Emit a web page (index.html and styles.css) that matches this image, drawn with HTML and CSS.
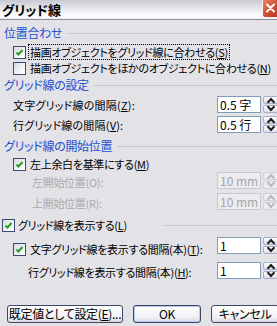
FILE: index.html
```html
<!DOCTYPE html>
<html lang="ja">
  <head>
    <meta charset="UTF-8" />
    <title>グリッド線</title>
    <link rel="stylesheet" href="styles.css">
  </head>
  <body>
    <div class="dialog">
      <div class="titlebar">
        <span class="title">グリッド線</span>
        <span class="close">
          <svg width="16" height="17" viewBox="0 0 16 17"><path d="M4 4.5 L11 11.5 M11 4.5 L4 11.5" stroke="#fff" stroke-width="2" stroke-linecap="round" /></svg>
        </span>
      </div>

      <div class="content">
        <div class="group g1"><span>位置合わせ</span></div>
        <div class="check cb1">
          <span class="box"><svg width="9" height="9" viewBox="0 0 9 9"><path d="M1.5 4.5 L3.5 6.5 L7.5 2" fill="none" stroke="#21a121" stroke-width="2" /></svg></span>
          <span class="focus">描画オブジェクトをグリッド線に合わせる(<u>S</u>)</span>
        </div>
        <div class="check cb2">
          <span class="box"></span>
          <span>描画オブジェクトをほかのオブジェクトに合わせる(<u>N</u>)</span>
        </div>

        <div class="group g2"><span>グリッド線の設定</span></div>
        <div class="row row-z">
          <span class="label">文字グリッド線の間隔(<u>Z</u>):</span>
          <div class="field">
            <span class="input">0.5 字</span>
            <span class="spin"><i class="up"></i><i class="down"></i></span>
          </div>
        </div>
        <div class="row row-v">
          <span class="label">行グリッド線の間隔(<u>V</u>):</span>
          <div class="field">
            <span class="input">0.5 行</span>
            <span class="spin"><i class="up"></i><i class="down"></i></span>
          </div>
        </div>

        <div class="group g3"><span>グリッド線の開始位置</span></div>
        <div class="check cbm">
          <span class="box"><svg width="9" height="9" viewBox="0 0 9 9"><path d="M1.5 4.5 L3.5 6.5 L7.5 2" fill="none" stroke="#21a121" stroke-width="2" /></svg></span>
          <span>左上余白を基準にする(<u>M</u>)</span>
        </div>
        <div class="row row-o disabled">
          <span class="label">左開始位置(O):</span>
          <div class="field">
            <span class="input">10 mm</span>
            <span class="spin"><i class="up"></i><i class="down"></i></span>
          </div>
        </div>
        <div class="row row-r disabled">
          <span class="label">上開始位置(R):</span>
          <div class="field">
            <span class="input">10 mm</span>
            <span class="spin"><i class="up"></i><i class="down"></i></span>
          </div>
        </div>

        <div class="check group-check cbl">
          <span class="box"><svg width="9" height="9" viewBox="0 0 9 9"><path d="M1.5 4.5 L3.5 6.5 L7.5 2" fill="none" stroke="#21a121" stroke-width="2" /></svg></span>
          <span class="caption">グリッド線を表示する(<u>L</u>)</span>
        </div>
        <div class="row row-t">
          <div class="check">
            <span class="box"><svg width="9" height="9" viewBox="0 0 9 9"><path d="M1.5 4.5 L3.5 6.5 L7.5 2" fill="none" stroke="#21a121" stroke-width="2" /></svg></span>
            <span>文字グリッド線を表示する間隔(本)(<u>T</u>):</span>
          </div>
          <div class="field">
            <span class="input">1</span>
            <span class="spin"><i class="up"></i><i class="down"></i></span>
          </div>
        </div>
        <div class="row row-h">
          <span class="label">行グリッド線を表示する間隔(本)(<u>H</u>):</span>
          <div class="field">
            <span class="input">1</span>
            <span class="spin"><i class="up"></i><i class="down"></i></span>
          </div>
        </div>

        <div class="buttons">
          <button class="btn btn-default">既定値として設定(<u>E</u>)...</button>
          <button class="btn btn-ok">OK</button>
          <button class="btn btn-cancel">キャンセル</button>
        </div>
      </div>
    </div>
  </body>
</html>
```

FILE: styles.css
```css
html,
body {
  margin: 0;
  overflow: hidden;
}
body {
  background-color: #e3e2e7;
  font-family: "Noto Sans CJK JP", "Liberation Sans", sans-serif;
  font-size: 11px;
  line-height: 14px;
  letter-spacing: -0.3px;
  color: #000;
  white-space: nowrap;
  font-feature-settings: "palt";
}
u {
  text-decoration: underline;
  text-underline-offset: 1px;
}

.dialog {
  width: 279px;
  height: 326px;
}

.titlebar {
  display: flex;
  justify-content: space-between;
  height: 19px;
  border-bottom: 1px solid #8e8e9c;
  background: linear-gradient(#c9c9d2, #f6f6f8 70%, #ffffff 85%, #eeeef1);
}
.titlebar .title {
  padding: 2px 0 0 2px;
  font-size: 13px;
  font-weight: 700;
  line-height: 15px;
  letter-spacing: 0;
}
.titlebar .close {
  width: 16px;
  height: 17px;
  border-radius: 0 0 0 3px;
  border: 1px solid #f2f2f2;
  border-top: none;
  border-right: none;
  background: linear-gradient(135deg, #e8826a, #cf4a2e 55%, #b8361f);
}
.titlebar .close svg {
  display: block;
}

.content {
  display: flex;
  flex-direction: column;
}

/* group headings */
.group {
  display: flex;
  align-items: center;
  height: 14px;
  padding-left: 4px;
  color: #2150d0;
  font-size: 12px;
}
.group::after,
.group-check::after {
  content: "";
  flex: 1;
  height: 0;
  border-top: 1px solid #c6c6cc;
  margin-left: 5px;
}
.g1 {
  margin-top: 6px;
}
.g2 {
  margin-top: 2px;
}
.g3 {
  margin-top: 5px;
}

/* checkboxes */
.check {
  display: flex;
  align-items: center;
  height: 16px;
  padding-left: 13px;
}
.check .box {
  box-sizing: border-box;
  display: flex;
  align-items: center;
  justify-content: center;
  flex: none;
  width: 13px;
  height: 13px;
  margin-right: 4px;
  border: 1px solid #3a4c70;
  background: linear-gradient(135deg, #d8d8de, #f4f4f6 60%, #ffffff);
}
.check .box svg {
  display: block;
}
.check .focus {
  outline: 1px dotted #000;
  padding: 0 1px;
  margin-left: -1px;
}
.cb1 {
  margin-top: 4px;
}
.cbm {
  margin-top: 3px;
}
.cbl {
  margin-top: 7px;
  padding-left: 2px;
}
.cbl .box {
  margin-right: 3px;
}
.cbl .caption {
  width: 140px;
}

/* label + spin field rows */
.row {
  display: flex;
  align-items: center;
  height: 19px;
  padding-left: 13px;
}
.row .label {
  flex: 1;
}
.field {
  display: flex;
  align-items: center;
  gap: 2px;
}
.input {
  box-sizing: border-box;
  width: 44px;
  height: 17px;
  padding: 1px 0 0 2px;
  border: 1px solid #7f9db9;
  background-color: #fff;
  font-size: 12px;
  letter-spacing: 0;
  line-height: 14px;
}
.spin {
  display: flex;
  flex-direction: column;
  width: 16px;
}
.spin i {
  box-sizing: border-box;
  display: block;
  height: 8px;
  border: 1px solid #a6afc8;
  border-radius: 2px;
  background: linear-gradient(#ffffff, #dcdce5);
  position: relative;
}
.spin i::after {
  content: "";
  position: absolute;
  left: 4px;
  top: 1px;
  width: 4px;
  height: 4px;
  border-left: 2px solid #202020;
  border-top: 2px solid #202020;
  transform: translate(0, 1px) rotate(45deg);
}
.spin .down::after {
  top: -2px;
  transform: translate(0, 0) rotate(225deg);
}
.spin .down {
  margin-top: 1px;
}

.row-z {
  margin-top: 3px;
}
.row-z .label,
.row-v .label {
  letter-spacing: 0.2px;
}
.row-v {
  margin-top: 1px;
}
.row-o {
  margin-top: 0;
  height: 17px;
}
.row-r {
  margin-top: 4px;
  height: 17px;
}
.disabled .label {
  padding: 2px 0 0 19px;
  color: #aaaaae;
}
.disabled .input {
  border-color: #c9c8cf;
  background-color: #ecebef;
  color: #a6a6aa;
}
.disabled .spin i {
  border-color: #d2d2da;
  background: #ececf0;
}
.disabled .spin i::after {
  border-color: #b8b8c0;
}

.row-t {
  margin-top: 3px;
  height: 20px;
  align-items: flex-end;
  padding-left: 0;
}
.row-t .check {
  flex: 1;
  height: 14px;
}
.row-t .field {
  align-self: flex-start;
  margin-top: 1px;
}
.row-h {
  margin-top: 5px;
  padding-left: 28px;
}
.row-h .label {
  padding-top: 2px;
}

/* dialog buttons */
.buttons {
  display: flex;
  gap: 10px;
  margin-top: 25px;
  padding-left: 7px;
}
.btn {
  box-sizing: border-box;
  height: 18px;
  padding: 0;
  border: 1px solid #3b4868;
  border-radius: 3px;
  background: linear-gradient(#ffffff, #f1f1f4 70%, #d9d8df);
  font-family: inherit;
  font-size: 12px;
  line-height: 14px;
  letter-spacing: -0.3px;
  color: #000;
  white-space: nowrap;
  font-feature-settings: "palt";
}
.btn-default {
  width: 116px;
}
.btn-ok {
  width: 68px;
  box-shadow: inset 0 0 0 1px #b8c8f0;
}
.btn-cancel {
  width: 68px;
}
```
